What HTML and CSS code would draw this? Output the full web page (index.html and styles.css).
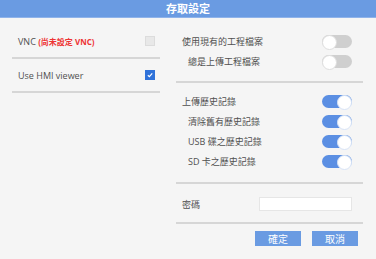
FILE: index.html
```html
<!DOCTYPE html>
<html lang="zh-Hant">
<head>
    <meta charset="UTF-8">
    <meta name="viewport" content="width=device-width, initial-scale=1.0">
    <title>存取設定</title>
    <link rel="stylesheet" href="styles.css">
</head>
<body>
    <div class="header">存取設定</div>

    <div class="dialog-body">
        <div class="left-col">
            <div class="option-row">
                <span>VNC <span class="warn">(尚未設定 VNC)</span></span>
                <span class="checkbox"></span>
            </div>
            <div class="option-row">
                <span>Use HMI viewer</span>
                <span class="checkbox checked">
                    <svg width="10" height="10" viewBox="0 0 10 10"><path d="M2.3 5.3 L4.2 7 L7.8 3" fill="none" stroke="#fff" stroke-width="1.4"/></svg>
                </span>
            </div>
        </div>

        <div class="right-col">
            <div class="group group-project">
                <div class="switch-row">
                    <span>使用現有的工程檔案</span>
                    <span class="toggle"></span>
                </div>
                <div class="switch-row sub">
                    <span>總是上傳工程檔案</span>
                    <span class="toggle"></span>
                </div>
            </div>

            <div class="group group-history">
                <div class="switch-row">
                    <span>上傳歷史記錄</span>
                    <span class="toggle on"></span>
                </div>
                <div class="switch-row sub">
                    <span>清除舊有歷史記錄</span>
                    <span class="toggle on"></span>
                </div>
                <div class="switch-row sub">
                    <span>USB 碟之歷史記錄</span>
                    <span class="toggle on"></span>
                </div>
                <div class="switch-row sub">
                    <span>SD 卡之歷史記錄</span>
                    <span class="toggle on"></span>
                </div>
            </div>

            <div class="group group-password">
                <div class="switch-row">
                    <span>密碼</span>
                    <input type="password" class="password-input">
                </div>
            </div>

            <div class="actions">
                <button class="btn">確定</button>
                <button class="btn">取消</button>
            </div>
        </div>
    </div>
</body>
</html>
```

FILE: styles.css
```css
* {
    margin: 0;
    padding: 0;
    box-sizing: border-box;
}

body {
    background: #f5f5f5;
    color: #505050;
    font-family: 'Open Sans', 'Noto Sans CJK TC', sans-serif;
    font-size: 9px;
    width: 376px;
    height: 259px;
    overflow: hidden;
}

.header {
    height: 18px;
    line-height: 18px;
    background: #6a9be2;
    color: #fff;
    font-size: 11px;
    font-weight: bold;
    text-align: center;
    border-bottom: 1px solid #8fb3ea;
}

.dialog-body {
    display: flex;
    gap: 16px;
    padding: 7px 13px 0 12px;
}

.left-col {
    width: 148px;
}

.option-row {
    height: 34px;
    display: flex;
    align-items: center;
    justify-content: space-between;
    padding: 0 5px 0 6px;
    border-bottom: 2px solid #d6d6d6;
}

.warn {
    color: #ee3333;
    font-size: 8px;
    font-weight: bold;
}

.checkbox {
    width: 10px;
    height: 10px;
    background: #e8e8e8;
    border: 1px solid #dcdcdc;
    display: flex;
    align-items: center;
    justify-content: center;
}

.checkbox.checked {
    background: #2f72d9;
    border-color: #2f72d9;
}

.right-col {
    width: 187px;
}

.group {
    border-bottom: 2px solid #d6d6d6;
}

.group-project {
    padding: 6px 0 10px;
}

.group-history {
    padding: 8px 0 11px;
}

.group-password {
    padding: 10px 0 8px;
}

.switch-row {
    height: 20px;
    display: flex;
    align-items: center;
    justify-content: space-between;
    padding: 0 11px 0 6px;
}

.switch-row.sub {
    padding-left: 12px;
}

.toggle {
    position: relative;
    width: 30px;
    height: 13px;
    border-radius: 7px;
    background: #cfcfcf;
}

.toggle::after {
    content: "";
    position: absolute;
    top: 0;
    left: 0;
    width: 13px;
    height: 13px;
    border-radius: 50%;
    background: #fff;
    border: 1px solid #dedede;
}

.toggle.on {
    background: #5b8fe3;
}

.toggle.on::after {
    left: auto;
    right: 0;
    border-color: #d8e4f6;
}

.password-input {
    width: 93px;
    height: 14px;
    background: #fff;
    border: 1px solid #e6e6e6;
    outline: none;
}

.actions {
    display: flex;
    justify-content: flex-end;
    gap: 11px;
    padding: 7px 5px 0 0;
}

.btn {
    width: 46px;
    height: 15px;
    background: #6a9be2;
    color: #fff;
    border: none;
    font-family: 'Noto Sans CJK TC', sans-serif;
    font-size: 10px;
    line-height: 15px;
}
```
